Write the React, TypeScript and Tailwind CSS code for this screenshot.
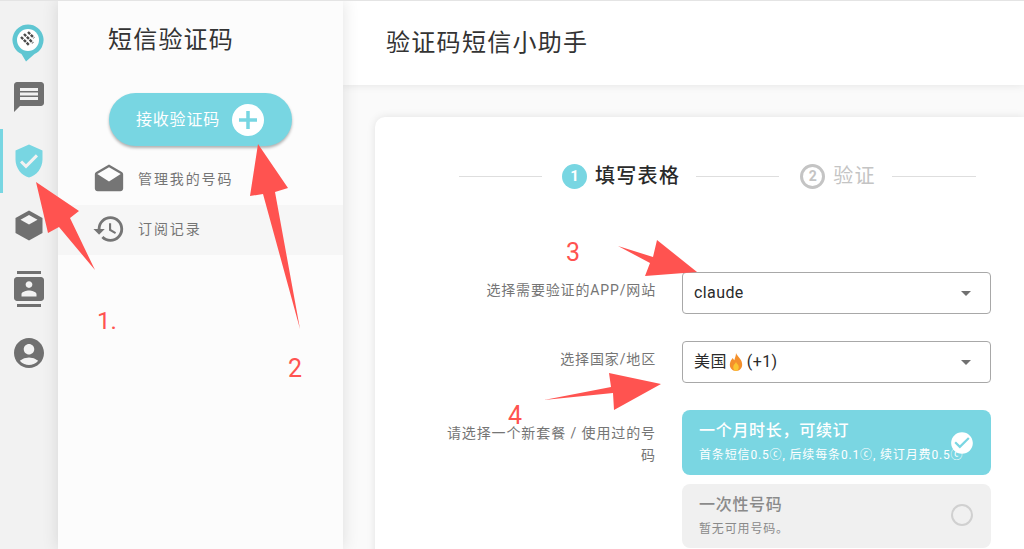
import { MdAccountCircle, MdContacts, MdDrafts, MdHistory, MdMessage, MdVerifiedUser, MdArrowDropDown, MdCheckCircle } from "react-icons/md";

const font = "font-['Roboto','Noto_Sans_CJK_SC',sans-serif]";

const Logo = () => (
  <svg width="32" height="38" viewBox="0 0 32 38">
    <path d="M16 .5a15.500 15.500 0 0 1 6.500 29.600L14 37.500 9.500 30.100A15.500 15.500 0 0 1 16 .5z" fill="#5fc6d2" />
    <circle cx="16" cy="16" r="11" fill="#fff" />
    <g stroke="#4a4a4a" strokeWidth="2.400" strokeDasharray="3 1">
      <path d="M9 13l8 8" />
      <path d="M12 10l9 9" />
      <path d="M16 8l6 6" />
    </g>
  </svg>
);

const Cube = () => (
  <svg width="28" height="31" viewBox="0 0 28 31">
    <path d="M14 .5L27.500 8v15L14 30.500.5 23V8z" fill="#707070" />
    <path d="M14 5l8.500 4.800L14 14.500 5.500 9.800z" fill="#f4f4f4" />
  </svg>
);

const Flame = () => (
  <svg width="18" height="20" viewBox="0 0 16 18" className="inline-block">
    <path d="M8 1c1 3 5 5 5.500 9.500C14 14 11.500 17 8 17s-6-3-5.500-6.500C3 8 4 7 5 5.500c.5 1 1 1.500 1.500 2C7 5.500 8 3.500 8 1z" fill="#f4902c" />
    <path d="M8 9c.5 1.500 2.500 2.500 2.500 4.500S9.500 17 8 17s-2.500-1.500-2.500-3.500S7.500 10.500 8 9z" fill="#fbc531" />
  </svg>
);

const Select = ({ children }: { children: React.ReactNode }) => (
  <div className="w-[309px] h-[42px] border border-[#a8a8a8] rounded-[4px] bg-white flex items-center justify-between pl-[11px] pr-[14px] text-[16px] tracking-[0.4px] text-[#2a2a2a]">
    <span className="flex items-center">{children}</span>
    <MdArrowDropDown className="text-[24px] text-[#707070] -mr-[2px]" />
  </div>
);

const Line = ({ long }: { long?: boolean }) => (
  <div className={long ? "h-px bg-[#dedede] w-[84px] shrink-0" : "h-px bg-[#dedede] w-[83px] shrink-0"} />
);

const navIcon = "text-[36px] text-[#707070]";

const App = () => {
  return (
    <div className={`${font} relative w-[1024px] h-[549px] overflow-hidden flex bg-[#fafafa] border-t border-[#e4e4e4]`}>
      <aside className="w-[58px] shrink-0 bg-[#f2f2f2] flex flex-col items-center">
        <div className="h-[64px] w-full flex items-end justify-center pb-[3px] pr-[3px]"><Logo /></div>
        <div className="h-[64px] w-full flex items-center justify-center"><MdMessage className={navIcon} /></div>
        <div className="h-[64px] w-full flex items-center justify-center border-l-[3px] border-[#78d6e2] pr-[3px]">
          <MdVerifiedUser className="text-[36px] text-[#78d6e2]" />
        </div>
        <div className="h-[64px] w-full flex items-center justify-center"><Cube /></div>
        <div className="h-[64px] w-full flex items-center justify-center"><MdContacts className={navIcon} /></div>
        <div className="h-[64px] w-full flex items-center justify-center"><MdAccountCircle className={navIcon} /></div>
      </aside>

      <nav className="w-[285px] shrink-0 bg-[#fcfcfc] shadow-[0_0_16px_rgba(0,0,0,0.12)] z-10 flex flex-col">
        <h2 className="pl-[50px] pt-[21px] text-[24px] leading-[36px] tracking-[1.2px] text-[#333]">短信验证码</h2>
        <div className="pl-[51px] pt-[35px]">
          <div className="w-[183px] h-[53px] rounded-full bg-[#78d6e2] shadow-[0_2px_3px_rgba(0,0,0,0.3)] flex items-center pl-[27px] text-white">
            <span className="text-[16px] tracking-[0.8px]">接收验证码</span>
            <span className="ml-[12px] w-[32px] h-[32px] rounded-full bg-white flex items-center justify-center">
              <svg width="18" height="18" viewBox="0 0 18 18">
                <path d="M9 0v18M0 9h18" stroke="#78d6e2" strokeWidth="3.500" />
              </svg>
            </span>
          </div>
        </div>
        <div className="mt-[8px] h-[51px] flex items-center pl-[34px] text-[#757575]">
          <MdDrafts className="text-[34px] shrink-0" />
          <span className="ml-[12px] text-[14px] tracking-[1.9px]">管理我的号码</span>
        </div>
        <div className="h-[50px] flex items-center pl-[34px] pb-[2px] bg-[#f6f6f6] text-[#757575]">
          <MdHistory className="text-[34px] shrink-0" />
          <span className="ml-[12px] text-[14px] tracking-[1.9px]">订阅记录</span>
        </div>
      </nav>

      <main className="flex-1 flex flex-col min-w-0">
        <header className="h-[84px] shrink-0 bg-white shadow-[0_1px_8px_rgba(0,0,0,0.08)] flex items-center pl-[43px] text-[24px] tracking-[1.3px] text-[#333]">
          验证码短信小助手
        </header>
        <div className="flex-1 pl-[32px] pt-[32px]">
          <section className="h-[600px] bg-white rounded-tl-[10px] shadow-[0_0_8px_rgba(0,0,0,0.1)] pt-[44px] pl-[84px]">
            <div className="flex items-center h-[30px] whitespace-nowrap">
              <Line />
              <span className="ml-[20px] w-[25px] h-[25px] shrink-0 rounded-full bg-[#78d6e2] text-white flex items-center justify-center text-[15px] font-bold">1</span>
              <span className="ml-[8px] text-[20px] tracking-[1.3px] font-medium text-[#2a2a2a]">填写表格</span>
              <div className="ml-[16px]"><Line /></div>
              <span className="ml-[21px] w-[25px] h-[25px] shrink-0 rounded-full border-[3px] border-[#c4c4c4] text-[#c4c4c4] flex items-center justify-center text-[14px] font-bold">2</span>
              <span className="ml-[8px] text-[20px] tracking-[1.3px] text-[#c4c4c4]">验证</span>
              <div className="ml-[16px]"><Line long /></div>
            </div>

            <div className="mt-[81px] -ml-[84px] pl-[64px] grid grid-cols-[217px_309px] gap-x-[26px] text-[14px] tracking-[0.85px] text-[#757575]">
              <label className="text-right pt-[8px] leading-[20px] whitespace-nowrap">选择需要验证的APP/网站</label>
              <Select>claude</Select>
              <label className="mt-[27px] text-right pt-[8px] leading-[20px]">选择国家/地区</label>
              <div className="mt-[27px]">
                <Select>美国<Flame /><span className="ml-[2px]">(+1)</span></Select>
              </div>
              <label className="mt-[27px] text-right pt-[12px] leading-[22px] tracking-[0.9px]">请选择一个新套餐 / 使用过的号码</label>
              <div className="mt-[27px] flex flex-col gap-[9px] tracking-normal">
                <div className="h-[65px] rounded-[8px] bg-[#7ad6e2] text-white relative pl-[17px] pt-[9px]">
                  <div className="text-[16px] leading-[24px] tracking-[0.7px] font-medium">一个月时长，可续订</div>
                  <div className="text-[12px] leading-[18px] mt-[3px] tracking-[0.85px] whitespace-nowrap">首条短信0.5ⓒ, 后续每条0.1ⓒ, 续订月费0.5ⓒ</div>
                  <MdCheckCircle className="absolute right-[16px] top-[20px] text-[26px] text-white" />
                </div>
                <div className="h-[64px] rounded-[8px] bg-[#f0f0f0] relative pl-[17px] pt-[9px]">
                  <div className="text-[16px] leading-[24px] tracking-[0.7px] font-medium text-[#8a8a8a]">一次性号码</div>
                  <div className="text-[12px] leading-[18px] mt-[3px] tracking-[0.85px] text-[#8a8a8a]">暂无可用号码。</div>
                  <span className="absolute right-[18px] top-[20px] w-[22px] h-[22px] rounded-full border-2 border-[#d0d0d0]" />
                </div>
              </div>
            </div>
          </section>
        </div>
      </main>

      {/* red annotation arrows on top of the shot */}
      <svg className="absolute inset-0 z-20 pointer-events-none" width="1024" height="549" viewBox="0 0 1024 549">
        <g fill="#ff5350">
          <polygon points="36,181 79,210 70,217 95,269 59,226 48,232" />
          <polygon points="258,143 288,187 275,191 300,328 263,193 250,195" />
          <polygon points="697,271 645,275 650,262 618,245 653,256 657,239" />
          <polygon points="661,383 614,409 613,392 544,399 611,386 609,372" />
        </g>
      </svg>
      <span className="absolute z-20 left-[97px] top-[303px] text-[24px] leading-[34px] text-[#ff5350]">1.</span>
      <span className="absolute z-20 left-[288px] top-[351px] text-[25px] leading-[34px] text-[#ff5350]">2</span>
      <span className="absolute z-20 left-[566px] top-[235px] text-[25px] leading-[34px] text-[#ff5350]">3</span>
      <span className="absolute z-20 left-[508px] top-[398px] text-[25px] leading-[34px] text-[#ff5350]">4</span>
    </div>
  );
};

export default App;
